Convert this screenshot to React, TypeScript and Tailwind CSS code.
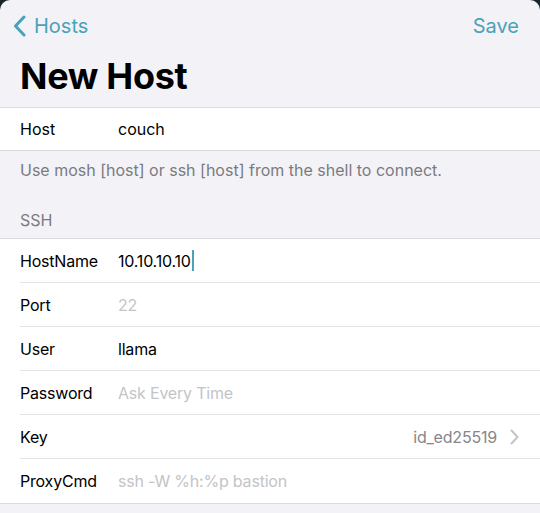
const rows = [
  { label: "HostName", value: "10.10.10.10", cursor: true },
  { label: "Port", placeholder: "22" },
  { label: "User", value: "llama" },
  { label: "Password", placeholder: "Ask Every Time" },
  { label: "Key", detail: "id_ed25519" },
  { label: "ProxyCmd", placeholder: "ssh -W %h:%p bastion" },
];

export default function App() {
  return (
    <div
      className="w-[540px] h-[513px] bg-[#17262a] overflow-hidden"
      style={{ fontFamily: "Inter, 'Noto Sans', sans-serif" }}
    >
      <div className="h-full bg-[#f2f2f7] rounded-t-[10px] flex flex-col">
        {/* Nav bar */}
        <div className="h-[52px] flex items-center justify-between pl-[13px] pr-[21px] text-[#4aa2b8]">
          <div className="flex items-center gap-[8px]">
            <svg width="13" height="22" viewBox="0 0 13 22" fill="none">
              <path d="M11 2 L2.5 11 L11 20" stroke="currentColor" strokeWidth="3" strokeLinecap="round" strokeLinejoin="round" />
            </svg>
            <span className="text-[20px]">Hosts</span>
          </div>
          <span className="text-[20px]">Save</span>
        </div>

        <h1 className="px-[20px] pt-[2px] text-[36px] font-bold text-black leading-[44px] tracking-[-0.3px] h-[55px]">
          New Host
        </h1>

        {/* Host group */}
        <div className="bg-white border-y border-[#dcdce0] h-[44px] flex items-center px-[20px] text-[16px] text-black">
          <span className="w-[98px]">Host</span>
          <span>couch</span>
        </div>
        <p className="px-[20px] pt-[7px] text-[16px] text-[#7b7b80] h-[49px]">
          Use mosh [host] or ssh [host] from the shell to connect.
        </p>

        <div className="px-[20px] pt-[8px] h-[38px] text-[16px] text-[#7b7b80]">SSH</div>

        <div className="bg-white border-y border-[#dcdce0]">
          {rows.map((row, i) => (
            <div key={row.label} className="pl-[20px]">
              <div
                className={`h-[44px] flex items-center pr-[21px] text-[16px] tracking-[-0.2px] ${
                  i < rows.length - 1 ? "border-b border-[#e4e4e7]" : ""
                }`}
              >
                <span className="w-[98px] text-black">{row.label}</span>
                {row.value && (
                  <span className="text-black flex items-center">
                    {row.value}
                    {row.cursor && <span className="inline-block w-[2px] h-[21px] bg-[#4aa2b8] ml-[1px]" />}
                  </span>
                )}
                {row.placeholder && <span className="text-[#c4c4c7]">{row.placeholder}</span>}
                {row.detail && (
                  <span className="ml-auto flex items-center gap-[13px] text-[#86868b]">
                    {row.detail}
                    <svg width="9" height="16" viewBox="0 0 9 16" fill="none">
                      <path d="M1.5 1.5 L7.5 8 L1.5 14.5" stroke="#c4c4c7" strokeWidth="2" strokeLinecap="round" strokeLinejoin="round" />
                    </svg>
                  </span>
                )}
              </div>
            </div>
          ))}
        </div>
      </div>
    </div>
  );
}
